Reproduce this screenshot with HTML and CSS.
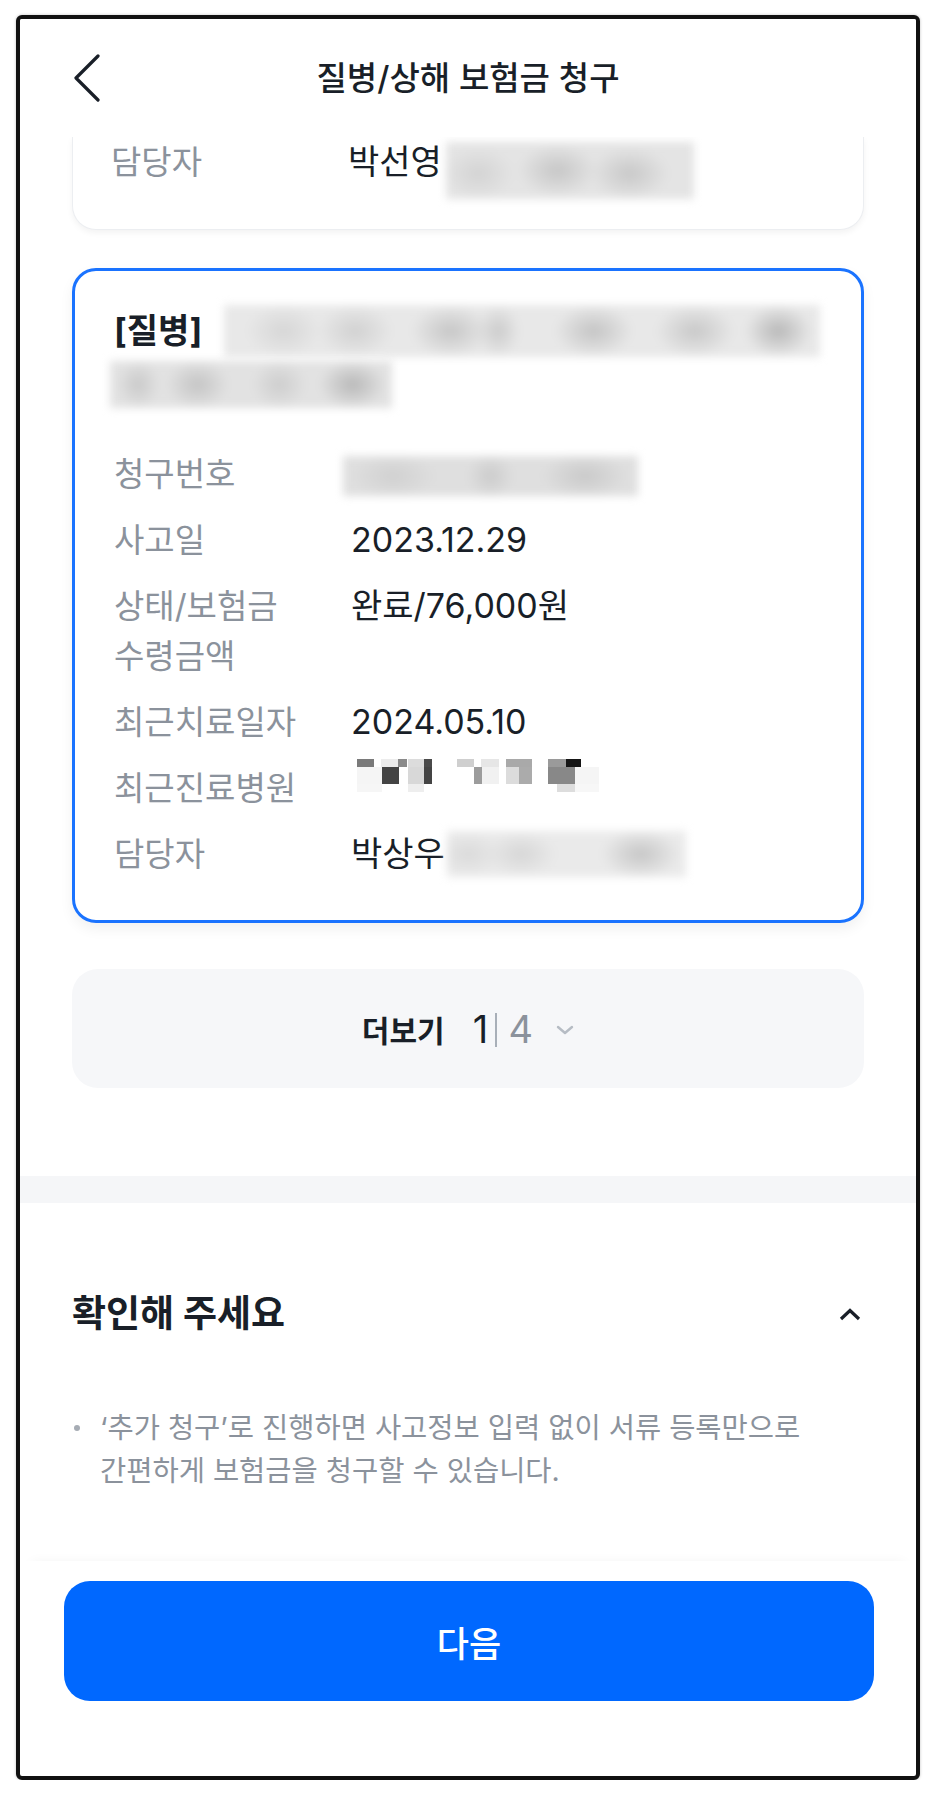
FILE: index.html
```html
<!DOCTYPE html>
<html lang="ko">
<head>
    <meta charset="UTF-8">
    <meta name="viewport" content="width=device-width, initial-scale=1.0">
    <title>질병/상해 보험금 청구</title>
    <link rel="stylesheet" href="styles.css">
</head>
<body>
    <div class="phone">
        <header class="top-bar">
            <button class="back-button" aria-label="뒤로">
                <svg width="28" height="48" viewBox="0 0 28 48">
                    <path d="M25 2 L3 24 L25 46" fill="none" stroke="#191f28" stroke-width="3.2" stroke-linecap="round" stroke-linejoin="round"/>
                </svg>
            </button>
            <h1 class="page-title">질병/상해 보험금 청구</h1>
            <span></span>
        </header>

        <div class="content">
            <div class="claim-card claim-card-cut">
                <div class="info-row">
                    <span class="info-label">담당자</span>
                    <span class="info-value">박선영<span class="blur blur-manager-1"></span></span>
                </div>
            </div>

            <div class="claim-card claim-card-selected">
                <div class="claim-title">
                    <div class="claim-title-line">
                        <span class="claim-type">[질병]</span>
                        <span class="blur blur-title-1"></span>
                    </div>
                    <div class="claim-title-line">
                        <span class="blur blur-title-2"></span>
                    </div>
                </div>

                <div class="info-list">
                    <div class="info-row">
                        <span class="info-label">청구번호</span>
                        <span class="info-value"><span class="blur blur-number"></span></span>
                    </div>
                    <div class="info-row">
                        <span class="info-label">사고일</span>
                        <span class="info-value">2023.12.29</span>
                    </div>
                    <div class="info-row">
                        <span class="info-label">상태/보험금 수령금액</span>
                        <span class="info-value">완료/76,000원</span>
                    </div>
                    <div class="info-row">
                        <span class="info-label">최근치료일자</span>
                        <span class="info-value">2024.05.10</span>
                    </div>
                    <div class="info-row">
                        <span class="info-label">최근진료병원</span>
                        <span class="info-value">
                            <svg class="mosaic" width="244" height="38" viewBox="0 0 244 38">
                                <rect x="0" y="0" width="17" height="8" fill="#7a7a7a"/>
                                <rect x="24" y="0" width="17" height="8" fill="#ececec"/>
                                <rect x="41" y="0" width="9" height="8" fill="#8a8a8a"/>
                                <rect x="51" y="0" width="16" height="8" fill="#dcdcdc"/>
                                <rect x="67" y="0" width="8" height="8" fill="#4a4a4a"/>
                                <rect x="100" y="0" width="17" height="8" fill="#cfcfcf"/>
                                <rect x="124" y="0" width="18" height="8" fill="#e6e6e6"/>
                                <rect x="149" y="0" width="26" height="8" fill="#a9a9a9"/>
                                <rect x="191" y="0" width="18" height="8" fill="#9a9a9a"/>
                                <rect x="209" y="0" width="15" height="8" fill="#151515"/>
                                <rect x="0" y="8" width="25" height="17" fill="#f5f5f5"/>
                                <rect x="25" y="8" width="17" height="17" fill="#444"/>
                                <rect x="51" y="8" width="16" height="17" fill="#d8d8d8"/>
                                <rect x="67" y="8" width="8" height="17" fill="#444"/>
                                <rect x="117" y="8" width="8" height="17" fill="#9c9c9c"/>
                                <rect x="125" y="8" width="17" height="17" fill="#f1f1f1"/>
                                <rect x="149" y="8" width="13" height="17" fill="#dcdcdc"/>
                                <rect x="162" y="8" width="13" height="17" fill="#ababab"/>
                                <rect x="191" y="8" width="27" height="17" fill="#888"/>
                                <rect x="218" y="8" width="24" height="17" fill="#f5f5f5"/>
                                <rect x="0" y="25" width="25" height="8" fill="#f6f6f6"/>
                                <rect x="51" y="25" width="16" height="8" fill="#eeeeee"/>
                                <rect x="200" y="25" width="18" height="8" fill="#dddddd"/>
                                <rect x="218" y="25" width="24" height="8" fill="#f7f7f7"/>
                            </svg>
                        </span>
                    </div>
                    <div class="info-row">
                        <span class="info-label">담당자</span>
                        <span class="info-value">박상우<span class="blur blur-manager-2"></span></span>
                    </div>
                </div>
            </div>

            <button class="more-button">
                <span class="more-label">더보기</span>
                <span class="more-count">1</span>
                <span class="more-divider"></span>
                <span class="more-total">4</span>
                <svg class="more-arrow" width="18" height="10" viewBox="0 0 18 10">
                    <path d="M2 2 L9 8 L16 2" fill="none" stroke="#b6bcc4" stroke-width="2.4" stroke-linecap="round" stroke-linejoin="round"/>
                </svg>
            </button>
        </div>

        <div class="section-gap"></div>

        <section class="notice">
            <div class="notice-head">
                <h2>확인해 주세요</h2>
                <svg width="22" height="13" viewBox="0 0 22 13">
                    <path d="M2 11 L11 2.5 L20 11" fill="none" stroke="#191f28" stroke-width="3.2" stroke-linejoin="miter"/>
                </svg>
            </div>
            <ul class="notice-list">
                <li>‘추가 청구’로 진행하면 사고정보 입력 없이 서류 등록만으로 간편하게 보험금을 청구할 수 있습니다.</li>
            </ul>
        </section>

        <div class="bottom-bar">
            <button class="next-button">다음</button>
        </div>
    </div>
</body>
</html>
```

FILE: styles.css
```css
body {
    margin: 0;
    background: #fff;
    font-family: Inter, "Noto Sans CJK KR", sans-serif;
    color: #191f28;
    word-break: keep-all;
}

.phone {
    box-sizing: border-box;
    width: 904px;
    height: 1765px;
    margin: 15px 0 0 16px;
    border: 4px solid #111;
    border-radius: 6px;
    background: #fff;
    overflow: hidden;
    display: flex;
    flex-direction: column;
    box-shadow: 0 0 3px rgba(0, 0, 0, 0.25);
}

/* header */
.top-bar {
    height: 118px;
    flex-shrink: 0;
    display: grid;
    grid-template-columns: 1fr auto 1fr;
    align-items: center;
    background: #fff;
    position: relative;
    z-index: 2;
}

.back-button {
    justify-self: start;
    margin-left: 53px;
    padding: 0;
    border: none;
    background: none;
    display: flex;
}

.page-title {
    margin: 0;
    font-size: 33px;
    font-weight: 500;
    line-height: 44px;
}

/* cards */
.content {
    padding: 0 52px;
}

.claim-card {
    background: #fff;
    border-radius: 24px;
}

.claim-card-cut {
    border: 1px solid #eceef1;
    border-top: none;
    border-radius: 0 0 24px 24px;
    padding: 0 38px 42px;
    box-shadow: 0 3px 6px rgba(0, 0, 0, 0.05);
}

.claim-card-selected {
    margin-top: 38px;
    border: 3px solid #1a73ff;
    padding: 34px 39px 41px;
    box-shadow: 0 6px 14px rgba(0, 0, 0, 0.06);
}

.claim-title-line {
    display: flex;
    align-items: center;
}

.claim-title-line + .claim-title-line {
    margin-top: 4px;
}

.claim-type {
    font-size: 34px;
    font-weight: 700;
    line-height: 52px;
}

.info-list {
    margin-top: 41px;
    display: flex;
    flex-direction: column;
    gap: 16px;
}

.info-row {
    display: grid;
    grid-template-columns: 237px 1fr;
    line-height: 50px;
}

.info-label {
    padding-right: 36px;
    font-size: 33px;
    color: #8b929c;
}

.info-value {
    font-size: 34px;
    color: #191f28;
    display: flex;
    align-items: center;
    height: 50px;
}

.mosaic {
    margin: -20px 0 0 6px;
}

/* blurred personal data */
.blur {
    display: inline-block;
    filter: blur(4px);
    background-color: #e4e4e4;
}

.blur-manager-1 {
    width: 248px;
    height: 57px;
    margin: 16px 0 0 4px;
    background-image:
        radial-gradient(ellipse 36px 26px at 13% 55%, #d3d3d3, transparent),
        radial-gradient(ellipse 40px 26px at 45% 50%, #c6c6c6, transparent),
        radial-gradient(ellipse 40px 26px at 74% 55%, #c8c8c8, transparent);
}

.blur-manager-2 {
    width: 239px;
    height: 46px;
    margin-left: 2px;
    background-color: #eaeaea;
    background-image:
        radial-gradient(ellipse 34px 22px at 9% 50%, #dadada, transparent),
        radial-gradient(ellipse 36px 22px at 31% 50%, #d6d6d6, transparent),
        radial-gradient(ellipse 40px 24px at 81% 50%, #c6c6c6, transparent);
}

.blur-title-1 {
    width: 596px;
    height: 52px;
    margin-left: 22px;
    background-color: #e8e8e8;
    background-image:
        radial-gradient(ellipse 38px 26px at 10% 50%, #d6d6d6, transparent),
        radial-gradient(ellipse 38px 26px at 22% 50%, #d1d1d1, transparent),
        radial-gradient(ellipse 40px 26px at 38% 50%, #c6c6c6, transparent),
        radial-gradient(ellipse 22px 26px at 46% 50%, #cbcbcb, transparent),
        radial-gradient(ellipse 40px 26px at 62% 50%, #c4c4c4, transparent),
        radial-gradient(ellipse 40px 26px at 79% 50%, #c8c8c8, transparent),
        radial-gradient(ellipse 34px 26px at 93% 50%, #b8b8b8, transparent);
}

.blur-title-2 {
    width: 282px;
    height: 47px;
    margin-left: -4px;
    background-color: #e2e2e2;
    background-image:
        radial-gradient(ellipse 22px 24px at 10% 50%, #c9c9c9, transparent),
        radial-gradient(ellipse 32px 24px at 31% 50%, #c4c4c4, transparent),
        radial-gradient(ellipse 28px 24px at 60% 50%, #cdcdcd, transparent),
        radial-gradient(ellipse 34px 24px at 86% 50%, #b8b8b8, transparent);
}

.blur-number {
    width: 295px;
    height: 40px;
    margin: 4px 0 0 -8px;
    background-color: #dfdfdf;
    background-image:
        radial-gradient(ellipse 44px 22px at 17% 50%, #d0d0d0, transparent),
        radial-gradient(ellipse 24px 22px at 50% 50%, #cbcbcb, transparent),
        radial-gradient(ellipse 44px 22px at 82% 50%, #c9c9c9, transparent);
}

/* more button */
.more-button {
    width: 100%;
    height: 119px;
    margin-top: 46px;
    border: none;
    border-radius: 26px;
    background: #f6f7f9;
    display: flex;
    align-items: center;
    justify-content: center;
    font-family: inherit;
    color: #191f28;
}

.more-label {
    font-size: 30px;
    font-weight: 700;
}

.more-count {
    margin-left: 28px;
    font-size: 38px;
}

.more-divider {
    width: 1.5px;
    height: 34px;
    margin: 2px 12px 0 7px;
    background: #a8afb8;
}

.more-total {
    font-size: 38px;
    color: #8b929c;
}

.more-arrow {
    margin: 2px 0 0 23px;
}

.section-gap {
    height: 27px;
    margin-top: 88px;
    background: #f5f6f8;
}

/* notice */
.notice {
    padding: 86px 52px 69px;
}

.notice-head {
    display: flex;
    align-items: center;
    justify-content: space-between;
    padding-right: 3px;
}

.notice-head h2 {
    margin: 0;
    font-size: 37px;
    font-weight: 700;
    line-height: 50px;
}

.notice-list {
    list-style: none;
    margin: 67px 0 0;
    padding: 0 0 0 28px;
    font-size: 28.5px;
    line-height: 43px;
    color: #8b929c;
}

.notice-list li {
    position: relative;
}

.notice-list li::before {
    content: "";
    position: absolute;
    left: -26px;
    top: 19px;
    width: 6px;
    height: 6px;
    border-radius: 50%;
    background: #a6acb4;
}

/* bottom */
.bottom-bar {
    padding: 20px 42px 0 44px;
    box-shadow: 0 -10px 12px -12px rgba(0, 0, 0, 0.06);
}

.next-button {
    width: 100%;
    height: 120px;
    border: none;
    border-radius: 26px;
    background: #0068ff;
    color: #fff;
    font-family: inherit;
    font-size: 35px;
    font-weight: 500;
}
```
